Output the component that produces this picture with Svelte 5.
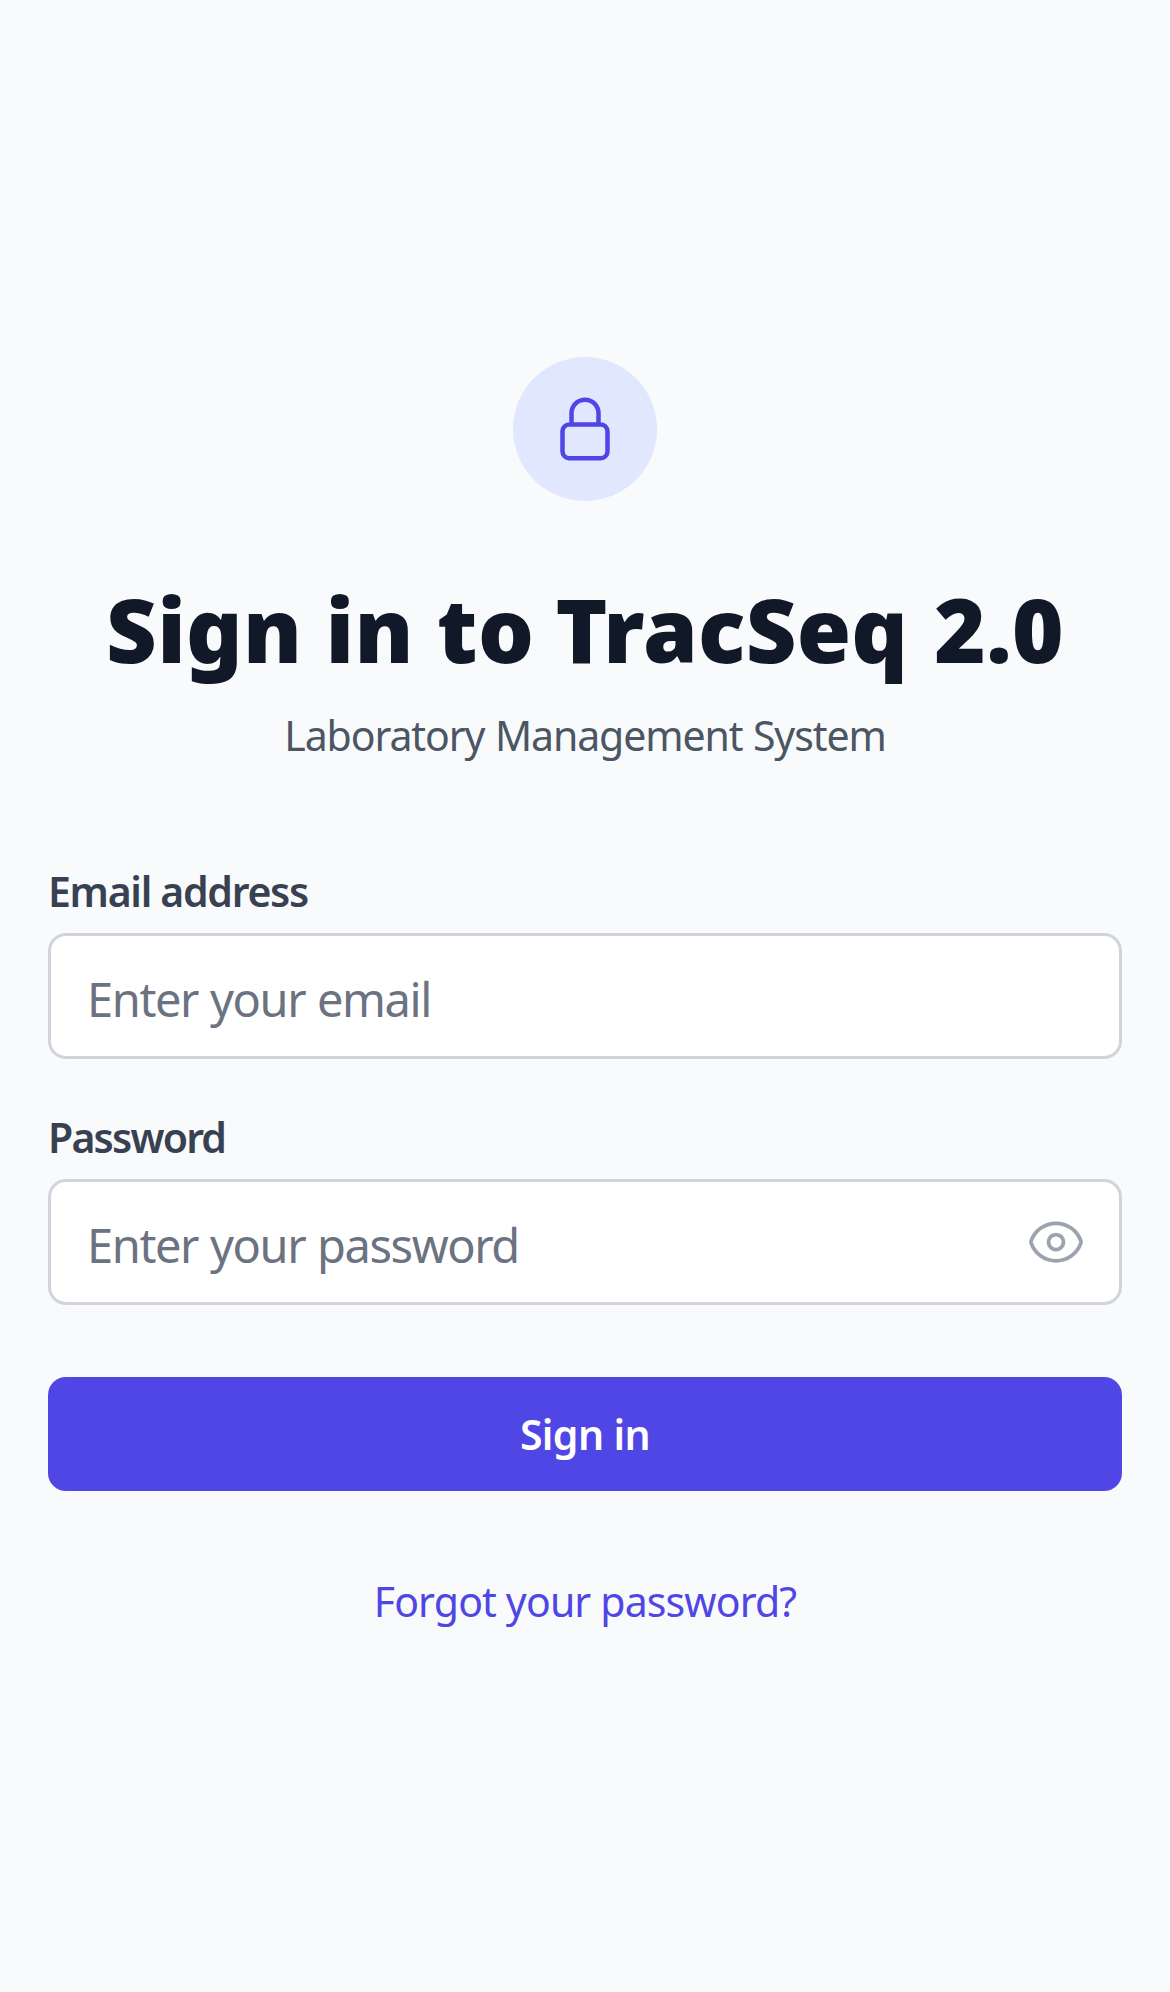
<script>
  let email = $state('');
  let password = $state('');
  let visible = $state(false);
</script>

<main class="page">
  <header class="intro">
    <div class="badge">
      <svg class="lock" viewBox="0 0 24 24" fill="none" stroke="currentColor" stroke-width="1.5" stroke-linecap="round" stroke-linejoin="round" aria-hidden="true">
        <path d="M16.5 10.5V6.75a4.5 4.5 0 1 0-9 0v3.75m-.75 11.25h10.5a2.25 2.25 0 0 0 2.25-2.25v-6.75a2.25 2.25 0 0 0-2.25-2.25H6.75a2.25 2.25 0 0 0-2.25 2.25v6.75a2.25 2.25 0 0 0 2.25 2.25Z" />
      </svg>
    </div>
    <h1>Sign in to <span>TracSeq</span> 2.0</h1>
    <p>Laboratory Management System</p>
  </header>

  <form onsubmit={(e) => e.preventDefault()}>
    <div class="field">
      <label for="email">Email address</label>
      <div class="control">
        <input id="email" type="email" placeholder="Enter your email" bind:value={email} />
      </div>
    </div>
    <div class="field">
      <label for="password" class="tight">Password</label>
      <div class="control">
        <input id="password" type={visible ? 'text' : 'password'} placeholder="Enter your password" bind:value={password} />
        <button class="toggle" type="button" aria-label="Show password" onclick={() => (visible = !visible)}>
          <svg viewBox="0 0 24 24" fill="none" stroke="currentColor" stroke-width="1.5" stroke-linecap="round" stroke-linejoin="round" aria-hidden="true">
            <path d="M2.036 12.322a1.012 1.012 0 0 1 0-.639C3.423 7.51 7.36 4.5 12 4.5c4.638 0 8.573 3.007 9.963 7.178.07.207.07.431 0 .639C20.577 16.49 16.64 19.5 12 19.5c-4.638 0-8.573-3.007-9.963-7.178Z" />
            <path d="M15 12a3 3 0 1 1-6 0 3 3 0 0 1 6 0Z" />
          </svg>
        </button>
      </div>
    </div>
    <button class="submit" type="submit">Sign in</button>
    <a class="forgot" href="#forgot">Forgot your password?</a>
  </form>
</main>

<style>
  :global(body) {
    margin: 0;
    background: #f9fafb;
  }

  .page {
    box-sizing: border-box;
    min-height: 1992px;
    padding: 357px 48px 0;
    background: #f9fafb;
    font-family: 'Noto Sans', 'Open Sans', sans-serif;
    font-size: 41px;
    line-height: 60px;
  }

  .intro {
    display: flex;
    flex-direction: column;
    align-items: center;
    white-space: nowrap;
  }

  .badge {
    display: grid;
    place-items: center;
    width: 144px;
    height: 144px;
    border-radius: 50%;
    background: #e0e7ff;
    color: #4f46e5;
  }

  .lock {
    width: 72px;
    height: 72px;
  }

  h1 {
    margin: 68px 0 0;
    color: #111827;
    font-size: 88px;
    font-weight: 900;
    line-height: 120px;
    letter-spacing: 0.35px;
    word-spacing: 0;
  }

  h1 span {
    margin: 0 3px 0 -2px;
    letter-spacing: 0.2px;
  }

  p {
    margin: 16px 0 0;
    color: #4b5563;
    letter-spacing: -1.1px;
    word-spacing: 1px;
  }

  form {
    display: flex;
    flex-direction: column;
    margin-top: 96px;
  }

  .field {
    margin-bottom: 48px;
  }

  label {
    display: block;
    margin-bottom: 12px;
    color: #374151;
    font-weight: 600;
    letter-spacing: -1.3px;
  }

  label.tight {
    letter-spacing: -1.8px;
  }

  .control {
    display: flex;
    align-items: center;
    box-sizing: border-box;
    height: 126px;
    padding: 0 33px 0 36px;
    border: 3px solid #d1d5db;
    border-radius: 18px;
    background: #fff;
  }

  input {
    flex: 1;
    min-width: 0;
    height: 72px;
    padding: 5px 0 0;
    border: 0;
    outline: 0;
    background: none;
    color: #111827;
    font: 400 47px/67px 'Noto Sans', 'Open Sans', sans-serif;
    letter-spacing: -1.4px;
    word-spacing: 1px;
  }

  input::placeholder {
    color: #6b7280;
    opacity: 1;
  }

  .toggle {
    display: flex;
    padding: 0;
    border: 0;
    background: none;
    color: #9ca3af;
  }

  .toggle svg {
    width: 60px;
    height: 60px;
  }

  .submit {
    height: 114px;
    margin-top: 24px;
    padding: 0;
    border: 0;
    border-radius: 18px;
    background: #4f46e5;
    color: #fff;
    font: 600 41px/60px 'Noto Sans', 'Open Sans', sans-serif;
    letter-spacing: -0.6px;
  }

  .forgot {
    align-self: center;
    margin-top: 80px;
    color: #4f46e5;
    text-decoration: none;
    white-space: nowrap;
    letter-spacing: -0.85px;
  }
</style>
